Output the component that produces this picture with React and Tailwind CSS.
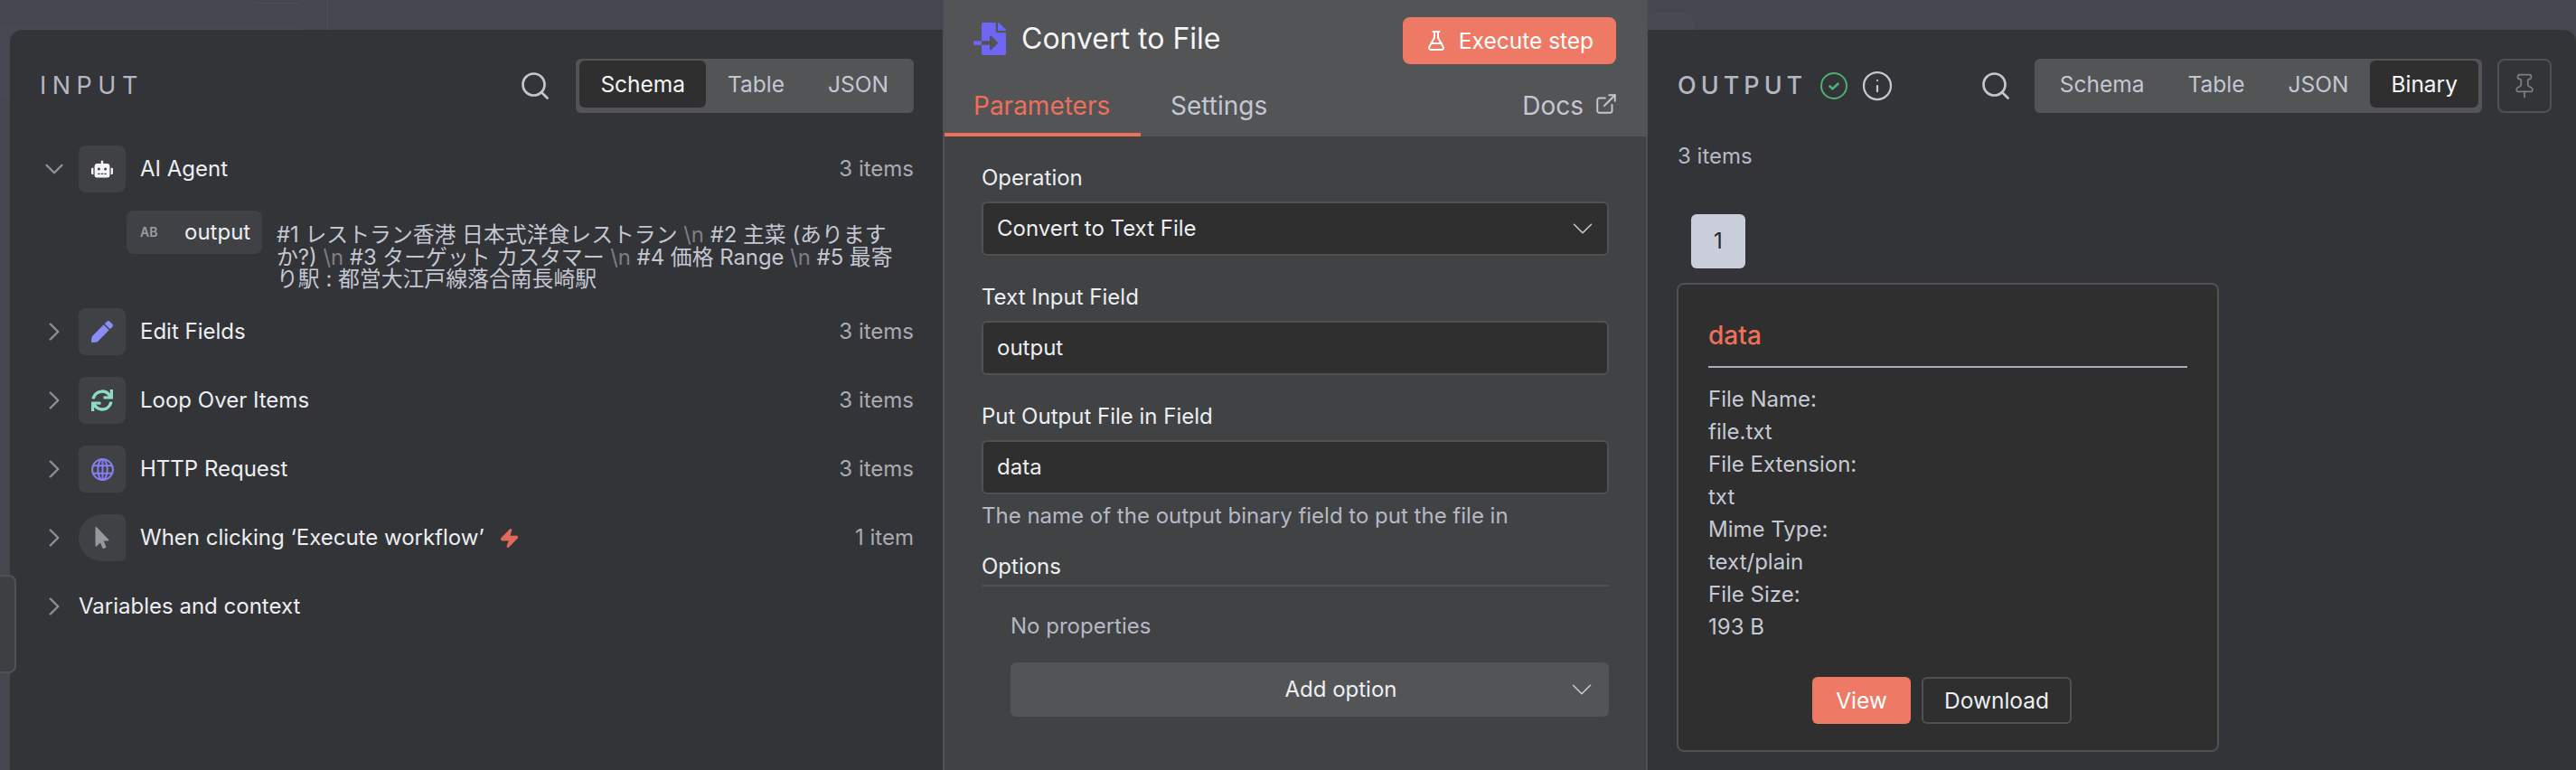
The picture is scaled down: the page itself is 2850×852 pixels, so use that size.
import { ChevronDown, ChevronRight, ExternalLink, FlaskConical, Info, Pin, Search, Zap } from "lucide-react";
import { FaFileImport, FaMousePointer, FaPen, FaRobot, FaSync } from "react-icons/fa";

function GlobeIcon() {
  return (
    <svg width="25" height="25" viewBox="0 0 24 24" fill="none" stroke="#8680ef" strokeWidth="1.9">
      <circle cx="12" cy="12" r="11" />
      <ellipse cx="12" cy="12" rx="5" ry="11" />
      <path d="M12 1v22M2 8h20M2 16h20" />
    </svg>
  );
}

function CheckIcon() {
  return (
    <svg width="30" height="30" viewBox="0 0 30 30" fill="none" stroke="#4fb06f" className="ml-[15px]">
      <circle cx="15" cy="15" r="14" strokeWidth="2" />
      <path d="M10.5 15.5l3 2.8 6-5.6" strokeWidth="2.6" strokeLinecap="round" strokeLinejoin="round" />
    </svg>
  );
}

const NODES = [
  { name: "Edit Fields", count: "3 items", icon: <FaPen size={24} className="text-[#8b8cf6]" /> },
  { name: "Loop Over Items", count: "3 items", icon: <FaSync size={24} className="text-[#8fdcc4]" /> },
  { name: "HTTP Request", count: "3 items", icon: <GlobeIcon /> },
];

const FILE_INFO = [
  ["File Name:", "file.txt"],
  ["File Extension:", "txt"],
  ["Mime Type:", "text/plain"],
  ["File Size:", "193 B"],
];

function ViewTabs({ tabs, active }) {
  return (
    <div className="flex h-[60px] items-center rounded-[6px] bg-[#535456] pb-[8px] pl-[4px] pr-[4px] pt-[4px] text-[24.5px]">
      {tabs.map((tab) => (
        <div
          key={tab}
          className={
            tab === active
              ? "flex h-[52px] items-center rounded-[6px] bg-[#2e2f2e] px-[23px] text-[#f5f5f7]"
              : "flex h-[52px] items-center px-[24px] text-[#c4c7d2]"
          }
        >
          {tab}
        </div>
      ))}
    </div>
  );
}

function RowChevron({ open }) {
  return (
    <div className="flex w-[76px] shrink-0 justify-center pl-[22px] text-[#8e8f97]">
      {open ? <ChevronDown size={34} strokeWidth={1.7} /> : <ChevronRight size={34} strokeWidth={1.7} />}
    </div>
  );
}

function NodeRow({ name, count, icon, children, open }) {
  return (
    <div className="flex h-[52px] items-center">
      <RowChevron open={open} />
      {icon}
      <div className="ml-[16px] flex items-center text-[#eceef2]">{name}{children}</div>
      <div className="ml-auto text-[#a9aab2]">{count}</div>
    </div>
  );
}

function NodeIcon({ children, trigger }) {
  return (
    <div className={`flex h-[52px] w-[52px] shrink-0 items-center justify-center bg-[#404144] ${trigger ? "rounded-bl-[26px] rounded-br-[6px] rounded-tl-[26px] rounded-tr-[8px]" : "rounded-[8px]"}`}>
      {children}
    </div>
  );
}

function Field({ label, value }) {
  return (
    <div>
      <div className="mb-[11px] flex h-[30px] items-center text-[#eceef2]">{label}</div>
      <div className="flex h-[60px] items-center rounded-[6px] border-2 border-[#505154] bg-[#2e2f2e] px-[15px] text-[#eceef2]">{value}</div>
    </div>
  );
}

export default function App() {
  return (
    <div
      className="relative flex h-[852px] w-[2850px] overflow-hidden bg-[#46464f] text-[24px] leading-[30px]"
      style={{ fontFamily: "Inter, 'Noto Sans CJK JP', sans-serif" }}
    >
      {/* Canvas nodes showing behind the panels */}
      <div className="absolute left-[278px] top-[-20px] h-[24px] w-[57px] rounded-[6px] border border-[#4e4e58]" />
      <div className="absolute left-0 top-[29px] h-[79px] w-[335px] rounded-r-[8px] bg-[#484852]" />
      <div className="absolute left-[362px] top-0 h-[33px] w-px bg-[#4e4e58]" />
      <div className="absolute left-[1823px] top-[15px] h-[18px] w-[50px] rounded-t-[6px] bg-[#4a4a55]" />

      {/* Left handle */}
      <div className="absolute left-0 top-[636px] z-10 h-[109px] w-[18px] rounded-r-[8px] border-2 border-l-0 border-[#505154] bg-[#3e3f42]" />

      {/* Input panel */}
      <section className="relative mt-[33px] ml-[11px] w-[1032px] rounded-tl-[14px] bg-[#333437]">
        <div className="mt-[32px] flex items-center pl-[33px] pr-[32px]">
          <div className="text-[27px] tracking-[6.5px] text-[#b4b6c2]">INPUT</div>
          <Search size={36} strokeWidth={1.8} className="ml-auto mr-[27px] text-[#c4c7d2]" />
          <ViewTabs tabs={["Schema", "Table", "JSON"]} active="Schema" />
        </div>

        <div className="mt-[36px] pr-[32px]">
          <NodeRow
            name="AI Agent"
            count="3 items"
            open
            icon={<NodeIcon><FaRobot size={24} className="text-[#f5f5f7]" /></NodeIcon>}
          />
          <div className="mb-[19.5px] ml-[129px] mt-[20px] flex">
            <div className="flex h-[48px] w-[150px] shrink-0 items-center rounded-[8px] bg-[#404144] pl-[15px] text-[#eceef2]">
              <span className="w-[49px] text-[14px] font-semibold text-[#9c9da6]">AB</span>
              output
            </div>
            <div className="ml-[16px] mt-[15px] w-[695px] text-[23.85px] leading-[24.5px] text-[#c4c7d2]">
              #1 レストラン香港 日本式洋食レストラン <span className="text-[#7d7e86]">\n</span> #2 主菜 (ありますか?) <span className="text-[#7d7e86]">\n</span> #3 ターゲット カスタマー <span className="text-[#7d7e86]">\n</span> #4 価格 Range <span className="text-[#7d7e86]">\n</span> #5 最寄り駅 : 都営大江戸線落合南長崎駅
            </div>
          </div>
          <div className="flex flex-col gap-[24px]">
            {NODES.map((node) => (
              <NodeRow key={node.name} name={node.name} count={node.count} icon={<NodeIcon>{node.icon}</NodeIcon>} />
            ))}
            <NodeRow
              name="When clicking ‘Execute workflow’"
              count="1 item"
              icon={<NodeIcon trigger><FaMousePointer size={24} className="text-[#97989e]" /></NodeIcon>}
            >
              <Zap size={23} className="ml-[16px] fill-[#e3695a] text-[#e3695a]" />
            </NodeRow>
          </div>
          <div className="mt-[35px] flex h-[30px] items-center">
            <RowChevron />
            <span className="text-[#eceef2]">Variables and context</span>
          </div>
        </div>
      </section>

      {/* Parameters panel */}
      <section className="relative flex w-[780px] shrink-0 flex-col border-x-2 border-[#505154] bg-[#414244]">
        <header className="h-[151px] bg-[#535456]">
          <div className="flex items-start pl-[32px] pr-[33px] pt-[19px]">
            <div className="flex h-[48px] items-center">
              <FaFileImport size={36} className="text-[#6f66f5]" />
              <span className="ml-[17px] text-[32px] text-[#f5f5f7]">Convert to File</span>
            </div>
            <button className="ml-auto flex h-[52px] w-[236px] items-center justify-center gap-[13px] rounded-[8px] bg-[#ee7a66] text-[24.5px] text-[#fff]">
              <FlaskConical size={24} strokeWidth={2} />
              Execute step
            </button>
          </div>
          <div className="mt-[18px] flex h-[62px] items-center text-[28px]">
            <div className="flex h-[62px] w-[217px] items-center border-b-4 border-[#ee6f5a] pb-[2px] pl-[32px] text-[#ee6f5a]">Parameters</div>
            <div className="ml-[33px] pb-[6px] text-[#c4c7d2]">Settings</div>
            <div className="ml-auto flex items-center gap-[12px] pb-[6px] pr-[31px] text-[#c4c7d2]">
              Docs
              <ExternalLink size={26} strokeWidth={1.8} className="-mt-[4px]" />
            </div>
          </div>
        </header>
        <div className="flex flex-col px-[41px] pt-[31px]">
          <div className="flex flex-col gap-[31px]">
            <div>
              <div className="mb-[11px] flex h-[30px] items-center text-[#eceef2]">Operation</div>
              <div className="flex h-[60px] items-center justify-between rounded-[6px] border-2 border-[#505154] bg-[#2e2f2e] px-[15px] text-[#eceef2]">
                Convert to Text File
                <ChevronDown size={38} strokeWidth={1} className="-mr-[7px] text-[#c4c7d2]" />
              </div>
            </div>
            <Field label="Text Input Field" value="output" />
            <Field label="Put Output File in Field" value="data" />
          </div>
          <p className="mt-[9px] text-[#b6b8c4]">The name of the output binary field to put the file in</p>
          <div className="mt-[26px] border-b-2 border-[#505154] pb-[5px] text-[#eceef2]">Options</div>
          <div className="pl-[32px]">
            <div className="mt-[29px] text-[#b6b8c4]">No properties</div>
            <div className="relative mt-[25px] flex h-[60px] items-center justify-center rounded-[6px] bg-[#535456] pl-[69px] text-[#eceef2]">
              Add option
              <ChevronDown size={38} strokeWidth={1} className="absolute right-[11px] text-[#c4c7d2]" />
            </div>
          </div>
        </div>
      </section>

      {/* Output panel */}
      <section className="relative mt-[33px] flex-1 rounded-tr-[14px] bg-[#333437] pl-[33px]">
        <div className="mt-[32px] flex items-center pr-[27px]">
          <div className="text-[27px] font-medium tracking-[5px] text-[#b4b6c2]">OUTPUT</div>
          <CheckIcon />
          <Info size={36} strokeWidth={1.5} className="ml-[15px] text-[#c4c7d2]" />
          <Search size={36} strokeWidth={1.8} className="ml-auto mr-[25px] text-[#c4c7d2]" />
          <ViewTabs tabs={["Schema", "Table", "JSON", "Binary"]} active="Binary" />
          <div className="ml-[17px] flex h-[60px] w-[60px] items-center justify-center rounded-[8px] border-2 border-[#505154]">
            <Pin size={30} strokeWidth={1.4} className="text-[#7d7e83]" />
          </div>
        </div>
        <div className="mt-[33px] text-[#b6b8c4]">3 items</div>
        <div className="ml-[15px] mt-[49px] flex h-[60px] w-[60px] items-center justify-center rounded-[6px] bg-[#c9ceda] text-[#26272a]">1</div>
        <div className="-ml-px mt-[16px] flex h-[519px] w-[600px] flex-col rounded-[8px] border-2 border-[#505154] bg-[#2e2f2e] px-[33px] pt-[40px]">
          <div className="text-[28px] font-medium leading-[32px] text-[#ee6f5a]">data</div>
          <div className="mt-[18px] border-b-2 border-[#a9acb8]" />
          <div className="mt-[17px] leading-[36px] text-[#c6c9d4]">
            {FILE_INFO.map(([label, value]) => (
              <div key={label}>
                <div>{label}</div>
                <div>{value}</div>
              </div>
            ))}
          </div>
          <div className="mt-[37px] flex justify-center gap-[12px] pr-[13px] text-[24.5px]">
            <button className="flex h-[52px] w-[109px] items-center justify-center rounded-[6px] bg-[#ee7a66] text-[#fff]">View</button>
            <button className="flex h-[52px] w-[166px] items-center justify-center rounded-[6px] border-2 border-[#505154] text-[#eceef2]">Download</button>
          </div>
        </div>
      </section>
    </div>
  );
}
